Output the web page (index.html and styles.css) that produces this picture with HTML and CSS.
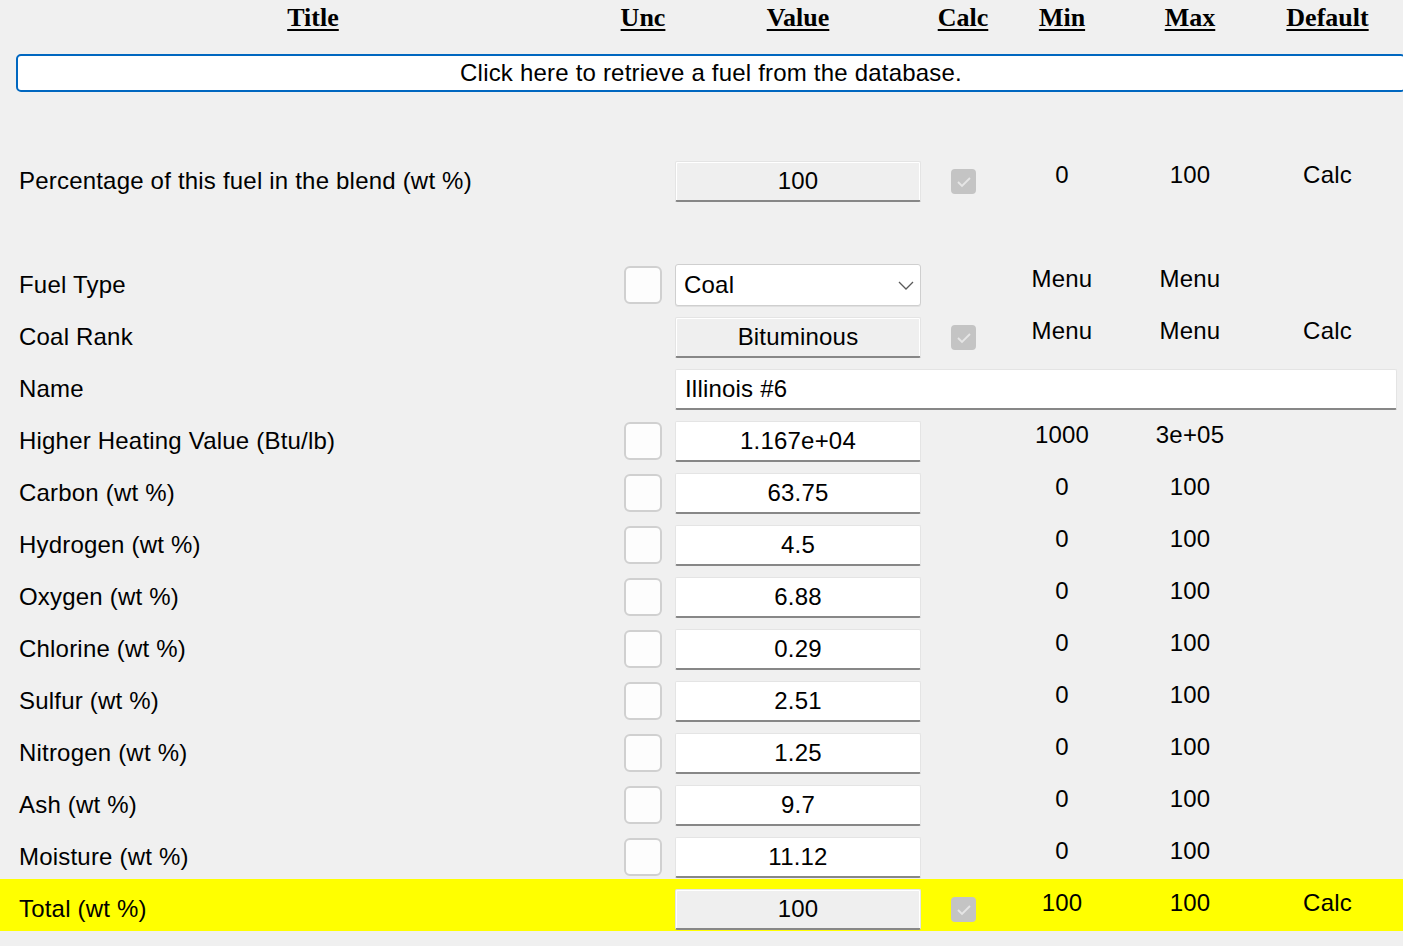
FILE: index.html
```html
<!DOCTYPE html>
<html lang="en">
<head>
  <meta charset="UTF-8">
  <title>Fuel Properties</title>
  <link rel="stylesheet" href="styles.css">
</head>
<body>
  <div class="head row-grid">
    <span class="title-head">Title</span>
    <span>Unc</span>
    <span>Value</span>
    <span>Calc</span>
    <span>Min</span>
    <span>Max</span>
    <span>Default</span>
  </div>

  <div class="db-btn">Click here to retrieve a fuel from the database.</div>

  <div class="row row-grid blend">
    <span class="label">Percentage of this fuel in the blend (wt %)</span>
    <span></span>
    <div class="box disabled">100</div>
    <span class="calc"><svg viewBox="0 0 25 25"><polyline points="7,13 11,17 19,9"/></svg></span>
    <span class="lim">0</span>
    <span class="lim">100</span>
    <span class="lim">Calc</span>
  </div>

  <div class="row-spacer"></div>

  <div class="row row-grid">
    <span class="label">Fuel Type</span>
    <span class="unc"></span>
    <div class="select">Coal
      <svg class="chev" viewBox="0 0 16 9"><path d="M1 1 L8 8 L15 1"/></svg>
    </div>
    <span></span>
    <span class="lim">Menu</span>
    <span class="lim">Menu</span>
    <span></span>
  </div>

  <div class="row row-grid">
    <span class="label">Coal Rank</span>
    <span></span>
    <div class="box disabled">Bituminous</div>
    <span class="calc"><svg viewBox="0 0 25 25"><polyline points="7,13 11,17 19,9"/></svg></span>
    <span class="lim">Menu</span>
    <span class="lim">Menu</span>
    <span class="lim">Calc</span>
  </div>

  <div class="row row-grid">
    <span class="label">Name</span>
    <span></span>
    <div class="box name">Illinois #6</div>
  </div>

  <div class="row row-grid">
    <span class="label">Higher Heating Value (Btu/lb)</span>
    <span class="unc"></span>
    <div class="box">1.167e+04</div>
    <span></span>
    <span class="lim">1000</span>
    <span class="lim">3e+05</span>
    <span></span>
  </div>

  <div class="row row-grid">
    <span class="label">Carbon (wt %)</span>
    <span class="unc"></span>
    <div class="box">63.75</div>
    <span></span>
    <span class="lim">0</span>
    <span class="lim">100</span>
    <span></span>
  </div>

  <div class="row row-grid">
    <span class="label">Hydrogen (wt %)</span>
    <span class="unc"></span>
    <div class="box">4.5</div>
    <span></span>
    <span class="lim">0</span>
    <span class="lim">100</span>
    <span></span>
  </div>

  <div class="row row-grid">
    <span class="label">Oxygen (wt %)</span>
    <span class="unc"></span>
    <div class="box">6.88</div>
    <span></span>
    <span class="lim">0</span>
    <span class="lim">100</span>
    <span></span>
  </div>

  <div class="row row-grid">
    <span class="label">Chlorine (wt %)</span>
    <span class="unc"></span>
    <div class="box">0.29</div>
    <span></span>
    <span class="lim">0</span>
    <span class="lim">100</span>
    <span></span>
  </div>

  <div class="row row-grid">
    <span class="label">Sulfur (wt %)</span>
    <span class="unc"></span>
    <div class="box">2.51</div>
    <span></span>
    <span class="lim">0</span>
    <span class="lim">100</span>
    <span></span>
  </div>

  <div class="row row-grid">
    <span class="label">Nitrogen (wt %)</span>
    <span class="unc"></span>
    <div class="box">1.25</div>
    <span></span>
    <span class="lim">0</span>
    <span class="lim">100</span>
    <span></span>
  </div>

  <div class="row row-grid">
    <span class="label">Ash (wt %)</span>
    <span class="unc"></span>
    <div class="box">9.7</div>
    <span></span>
    <span class="lim">0</span>
    <span class="lim">100</span>
    <span></span>
  </div>

  <div class="row row-grid">
    <span class="label">Moisture (wt %)</span>
    <span class="unc"></span>
    <div class="box">11.12</div>
    <span></span>
    <span class="lim">0</span>
    <span class="lim">100</span>
    <span></span>
  </div>

  <div class="row row-grid total">
    <span class="label">Total (wt %)</span>
    <span></span>
    <div class="box disabled">100</div>
    <span class="calc"><svg viewBox="0 0 25 25"><polyline points="7,13 11,17 19,9"/></svg></span>
    <span class="lim">100</span>
    <span class="lim">100</span>
    <span class="lim">Calc</span>
  </div>
</body>
</html>
```

FILE: styles.css
```css
* {
  margin: 0;
  padding: 0;
  box-sizing: border-box;
}
body {
  background: #f0f0f0;
  font-family: "Liberation Sans", Arial, sans-serif;
  font-size: 24px;
  letter-spacing: 0.2px;
  color: #000;
  overflow: hidden;
}
.row-grid {
  display: grid;
  grid-template-columns: 620px 46px 264px 66px 132px 124px 151px;
  align-items: center;
  justify-items: center;
}
.head {
  height: 36px;
  line-height: 36px;
  font-family: "Liberation Serif", "Times New Roman", serif;
  font-weight: bold;
  font-size: 26px;
  letter-spacing: 0;
}
.head span {
  text-decoration: underline;
  text-decoration-thickness: 2px;
  text-underline-offset: 3px;
}
.head .title-head {
  padding-left: 6px;
}
.db-btn {
  margin: 18px 0 0 16px;
  width: 1390px;
  height: 38px;
  border: 2px solid #0067c0;
  border-radius: 5px;
  background: #fff;
  text-align: center;
  line-height: 34px;
}
.row {
  height: 52px;
}
.blend {
  margin-top: 63px;
}
.row-spacer {
  height: 52px;
}
.label {
  justify-self: start;
  padding-left: 19px;
  white-space: nowrap;
}
.unc {
  width: 38px;
  height: 38px;
  background: #fdfdfd;
  border: 2px solid #d0d0d0;
  border-radius: 6px;
}
.box {
  width: 246px;
  height: 41px;
  background: #fff;
  border: 1px solid #e4e4e4;
  border-bottom: 2px solid #878787;
  border-radius: 2px;
  text-align: center;
  line-height: 38px;
}
.box.disabled {
  background: #efefef;
  box-shadow: inset 1px 1px 0 #fff, inset -1px 0 0 #fff;
}
.box.name {
  grid-column: 3 / 8;
  justify-self: start;
  margin-left: 9px;
  width: 722px;
  text-align: left;
  padding-left: 9px;
}
.select {
  position: relative;
  width: 246px;
  height: 42px;
  background: #fff;
  border: 1px solid #cfcfcf;
  border-radius: 3px;
  box-shadow: 0 1px 0 #e0e0e0;
  line-height: 40px;
  padding-left: 8px;
}
.chev {
  position: absolute;
  right: 6px;
  top: 16px;
  width: 16px;
  height: 9px;
  fill: none;
  stroke: #5a5a5a;
  stroke-width: 1.3;
}
.calc {
  width: 25px;
  height: 25px;
  background: #c4c4c4;
  border-radius: 4px;
}
.calc svg {
  display: block;
  width: 25px;
  height: 25px;
  fill: none;
  stroke: #e6e6e6;
  stroke-width: 1.8;
}
.lim {
  padding-bottom: 12px;
}
.total {
  background: #ffff00;
  margin-top: -4px;
  padding-top: 8px;
}
```
